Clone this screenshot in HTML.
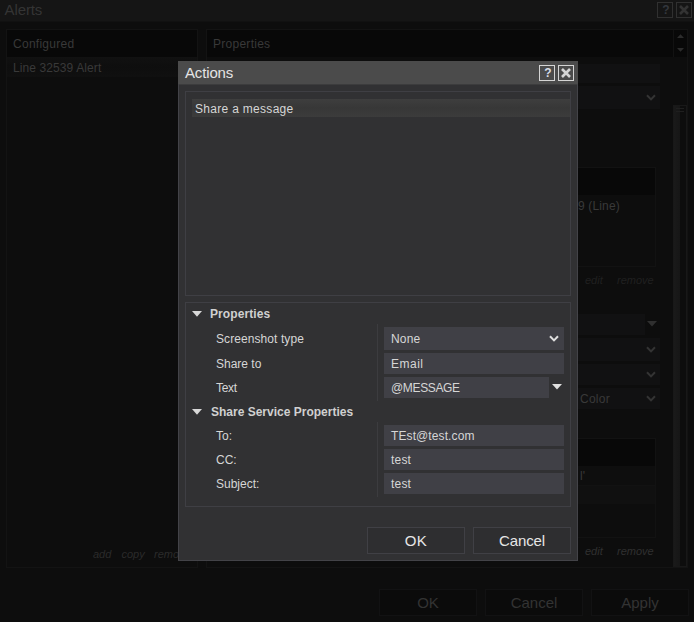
<!DOCTYPE html>
<html>
<head>
<meta charset="utf-8">
<title>Alerts</title>
<style>
html,body{margin:0;padding:0;}
body{width:694px;height:622px;overflow:hidden;background:#0d0d0d;position:relative;
 font-family:"Liberation Sans",Arial,sans-serif;font-size:12px;color:#dcdcdc;}
.a{position:absolute;box-sizing:border-box;}
.t{position:absolute;white-space:nowrap;line-height:14px;}
/* background window (dimmed) */
.bgt{color:#393939;}
.bgi{color:#2b2b2b;font-style:italic;font-size:11px;}
.bginp{background:#111112;}
.bgbtn{border:1px solid #121213;background:#0b0b0b;color:#333;font-size:15px;text-align:center;line-height:25px;}
.tb{border:1px solid #303030;}
/* dialog */
#dlg{left:178px;top:61px;width:400px;height:500px;background:#313133;border:1px solid #434348;}
.inp{background:#404046;height:21px;}
.lbl{color:#d6d6d6;}
.b{font-weight:bold;color:#d0d0d0;}
.btn{border:1px solid #404045;background:#2e2e30;color:#e6e6e6;font-size:15px;text-align:center;line-height:25px;height:27px;width:98px;}
.sep{background:#3c3c3f;width:1px;}
</style>
</head>
<body>

<!-- ===== background window ===== -->
<div class="a" style="left:0;top:0;width:694px;height:21px;background:#151515;"></div>
<div class="a" style="left:0;top:21px;width:694px;height:1px;background:#111111;"></div>
<div class="t bgt" style="left:4.5px;top:1px;font-size:15px;line-height:17px;color:#343434;letter-spacing:-0.1px;">Alerts</div>
<div class="a tb" style="left:657px;top:2px;width:16px;height:16px;"></div>
<div class="t" style="left:658px;top:3px;width:16px;text-align:center;color:#33373d;font-size:12px;font-weight:bold;">?</div>
<div class="a tb" style="left:676px;top:2px;width:16px;height:16px;"></div>
<svg class="a" style="left:676px;top:2px;" width="16" height="16" viewBox="0 0 16 16"><path d="M4 4 L12 12 M12 4 L4 12" stroke="#333" stroke-width="2.6" fill="none"/></svg>

<!-- Configured panel -->
<div class="a" style="left:6px;top:29px;width:192px;height:539px;border:1px solid #131313;background:#0d0d0d;"></div>
<div class="a" style="left:7px;top:30px;width:190px;height:27px;background:#080808;"></div>
<div class="t bgt" style="left:13px;top:37px;letter-spacing:0.27px;">Configured</div>
<div class="a" style="left:7px;top:57px;width:190px;height:20px;background:linear-gradient(#111111,#0e0e0e 50%,#101010);"></div>
<div class="t bgt" style="left:13px;top:61px;letter-spacing:0.1px;">Line 32539 Alert</div>
<div class="t bgi" style="left:93px;top:547px;">add</div>
<div class="t bgi" style="left:121.5px;top:547px;">copy</div>
<div class="t bgi" style="left:154px;top:547px;">remove</div>

<!-- Properties panel -->
<div class="a" style="left:206px;top:29px;width:482px;height:539px;border:1px solid #131313;background:#0d0d0d;"></div>
<div class="a" style="left:207px;top:30px;width:480px;height:27px;background:#080808;"></div>
<div class="a" style="left:673px;top:30px;width:1px;height:27px;background:#121212;"></div>
<div class="t bgt" style="left:213px;top:37px;letter-spacing:0.27px;">Properties</div>
<svg class="a" style="left:676px;top:33px;" width="10" height="20" viewBox="0 0 10 20"><path d="M1 5 L8 5 L4.5 1.3 Z M1 15 L8 15 L4.5 18.7 Z" fill="#2c2c2c"/></svg>

<div class="a bginp" style="left:560px;top:64px;width:100px;height:19px;"></div>
<div class="a bginp" style="left:560px;top:86px;width:100px;height:23px;"></div>
<svg class="a" style="left:645px;top:93px;" width="12" height="9" viewBox="0 0 12 9"><path d="M2 2.3 L6 6.4 L10 2.3" stroke="#343434" stroke-width="2" fill="none"/></svg>

<!-- table 1 -->
<div class="a" style="left:560px;top:167px;width:96px;height:100px;border:1px solid #121212;"></div>
<div class="a" style="left:560px;top:168px;width:95px;height:27px;background:#080808;"></div>
<div class="t bgt" style="left:578px;top:199px;letter-spacing:0.15px;">9 (Line)</div>
<div class="t bgi" style="left:585px;top:273px;color:#202020;">edit</div>
<div class="t bgi" style="left:617px;top:273px;color:#202020;">remove</div>

<!-- rows -->
<div class="a bginp" style="left:560px;top:314px;width:85px;height:21px;"></div>
<svg class="a" style="left:647px;top:321px;" width="10" height="6" viewBox="0 0 10 6"><path d="M0 0 L10 0 L5 5.5 Z" fill="#2f2f2f"/></svg>
<div class="a bginp" style="left:560px;top:338px;width:100px;height:23px;"></div>
<svg class="a" style="left:645px;top:345px;" width="12" height="9" viewBox="0 0 12 9"><path d="M2 2.3 L6 6.4 L10 2.3" stroke="#343434" stroke-width="2" fill="none"/></svg>
<div class="a bginp" style="left:560px;top:364px;width:100px;height:21px;"></div>
<svg class="a" style="left:645px;top:370px;" width="12" height="9" viewBox="0 0 12 9"><path d="M2 2.3 L6 6.4 L10 2.3" stroke="#343434" stroke-width="2" fill="none"/></svg>
<div class="a bginp" style="left:560px;top:388px;width:100px;height:21px;"></div>
<svg class="a" style="left:645px;top:394px;" width="12" height="9" viewBox="0 0 12 9"><path d="M2 2.3 L6 6.4 L10 2.3" stroke="#343434" stroke-width="2" fill="none"/></svg>
<div class="t bgt" style="left:580px;top:392px;letter-spacing:0.25px;">Color</div>

<!-- table 2 -->
<div class="a" style="left:560px;top:438px;width:96px;height:100px;border:1px solid #121212;"></div>
<div class="a" style="left:560px;top:439px;width:95px;height:27px;background:#080808;"></div>
<div class="a" style="left:560px;top:466px;width:95px;height:19px;background:#0e0e0e;"></div>
<div class="a" style="left:560px;top:485px;width:95px;height:19px;background:#101010;border-top:1px solid #121212;"></div>
<div class="t bgt" style="left:580px;top:469px;">l'</div>
<div class="t bgi" style="left:585px;top:544px;color:#303030;">edit</div>
<div class="t bgi" style="left:617px;top:544px;color:#303030;">remove</div>

<!-- scrollbar -->
<div class="a" style="left:673px;top:105px;width:14px;height:462px;border:1px solid #181818;background:linear-gradient(to right,#1a1a1a 0,#161616 6px,#0d0d0d 6px,#0d0d0d 12px);"></div>
<div class="a" style="left:676px;top:108px;width:8px;height:1px;background:#1f1f1f;"></div>
<div class="a" style="left:676px;top:111px;width:8px;height:1px;background:#1f1f1f;"></div>

<!-- bottom buttons -->
<div class="a bgbtn" style="left:379px;top:589px;width:98px;height:27px;">OK</div>
<div class="a bgbtn" style="left:485px;top:589px;width:98px;height:27px;">Cancel</div>
<div class="a bgbtn" style="left:591px;top:589px;width:98px;height:27px;">Apply</div>

<!-- ===== dialog ===== -->
<div id="dlg" class="a"></div>
<div class="a" style="left:178px;top:61px;width:400px;height:23px;background:#4b4b4b;"></div>
<div class="a" style="left:179px;top:84px;width:398px;height:1px;background:#3c3c3d;"></div>
<div class="t" style="left:185px;top:64px;font-size:15px;line-height:17px;color:#e4e4e4;letter-spacing:-0.15px;">Actions</div>
<div class="a" style="left:539px;top:65px;width:16px;height:16px;border:1px solid #d4d4d4;"></div>
<div class="t" style="left:540px;top:66px;width:16px;text-align:center;color:#d8dde6;font-size:12px;font-weight:bold;">?</div>
<div class="a" style="left:558px;top:65px;width:16px;height:16px;border:1px solid #d4d4d4;"></div>
<svg class="a" style="left:558px;top:65px;" width="16" height="16" viewBox="0 0 16 16"><path d="M4 4 L12 12 M12 4 L4 12" stroke="#d6d6d6" stroke-width="2.6" fill="none"/></svg>

<!-- list box -->
<div class="a" style="left:185px;top:91px;width:386px;height:205px;border:1px solid #3f3f44;"></div>
<div class="a" style="left:192px;top:99px;width:378px;height:18px;background:linear-gradient(#3e3e3e,#373737 50%,#3c3c3c);"></div>
<div class="t lbl" style="left:195px;top:102px;letter-spacing:0.3px;">Share a message</div>

<!-- properties box -->
<div class="a" style="left:185px;top:302px;width:386px;height:205px;border:1px solid #3f3f44;"></div>
<svg class="a" style="left:191.5px;top:311px;" width="10" height="6" viewBox="0 0 10 6"><path d="M0 0 L10 0 L5 5.8 Z" fill="#d8d8d8"/></svg>
<div class="t b" style="left:210px;top:307px;letter-spacing:0.1px;">Properties</div>
<div class="a sep" style="left:377px;top:324px;height:77px;"></div>
<div class="t lbl" style="left:216px;top:332px;letter-spacing:0.08px;">Screenshot type</div>
<div class="t lbl" style="left:216px;top:357px;">Share to</div>
<div class="t lbl" style="left:216px;top:381px;letter-spacing:-0.3px;">Text</div>
<div class="a inp" style="left:384px;top:327px;width:180px;height:23px;"></div>
<div class="t lbl" style="left:391px;top:332px;letter-spacing:0.2px;">None</div>
<svg class="a" style="left:548px;top:334px;" width="12" height="9" viewBox="0 0 12 9"><path d="M2 2.3 L6 6.4 L10 2.3" stroke="#e0e0e0" stroke-width="2" fill="none"/></svg>
<div class="a inp" style="left:384px;top:353px;width:180px;"></div>
<div class="t lbl" style="left:391px;top:357px;letter-spacing:0.5px;">Email</div>
<div class="a inp" style="left:384px;top:377px;width:165px;"></div>
<div class="t lbl" style="left:391px;top:381px;letter-spacing:-0.35px;">@MESSAGE</div>
<svg class="a" style="left:551.5px;top:384px;" width="10" height="6" viewBox="0 0 10 6"><path d="M0 0 L10 0 L5 5.5 Z" fill="#e0e0e0"/></svg>

<svg class="a" style="left:191.5px;top:409px;" width="10" height="6" viewBox="0 0 10 6"><path d="M0 0 L10 0 L5 5.8 Z" fill="#d8d8d8"/></svg>
<div class="t b" style="left:211px;top:405px;">Share Service Properties</div>
<div class="a sep" style="left:377px;top:422px;height:75px;"></div>
<div class="t lbl" style="left:216px;top:429px;">To:</div>
<div class="t lbl" style="left:216px;top:453px;">CC:</div>
<div class="t lbl" style="left:216px;top:477px;">Subject:</div>
<div class="a inp" style="left:384px;top:425px;width:180px;"></div>
<div class="t lbl" style="left:391px;top:429px;letter-spacing:0.1px;">TEst@test.com</div>
<div class="a inp" style="left:384px;top:449px;width:180px;"></div>
<div class="t lbl" style="left:391px;top:453px;letter-spacing:0.2px;">test</div>
<div class="a inp" style="left:384px;top:473px;width:180px;"></div>
<div class="t lbl" style="left:391px;top:477px;letter-spacing:0.2px;">test</div>

<div class="a btn" style="left:367px;top:527px;letter-spacing:0.5px;">OK</div>
<div class="a btn" style="left:473px;top:527px;letter-spacing:-0.15px;">Cancel</div>

</body>
</html>
